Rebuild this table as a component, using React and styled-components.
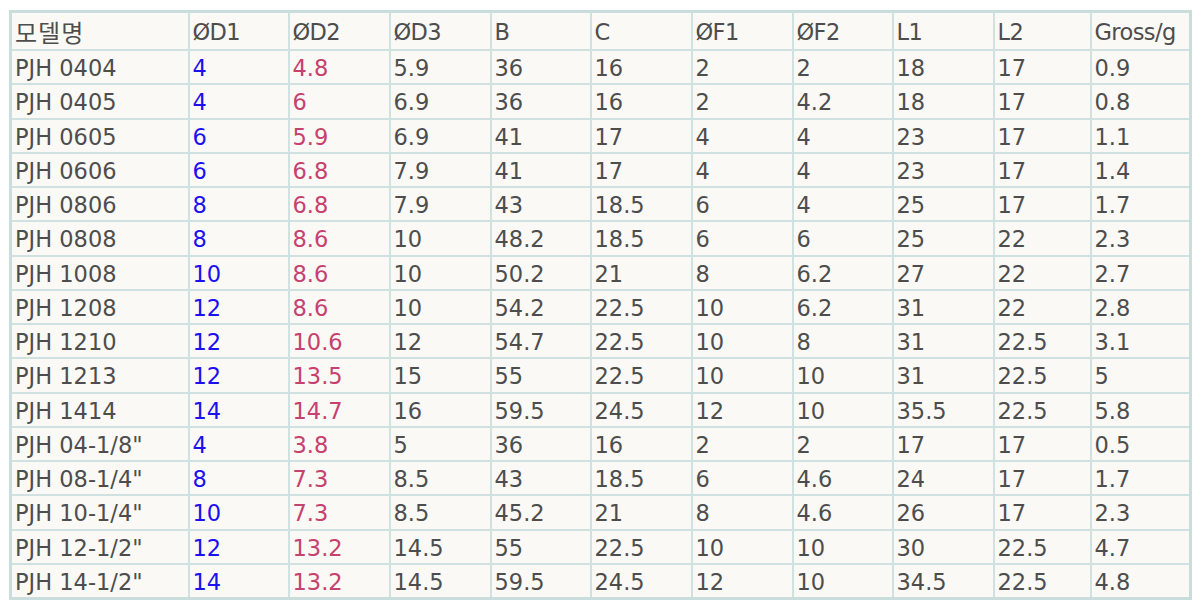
import styled, { createGlobalStyle } from "styled-components";

const GlobalStyle = createGlobalStyle`
  body {
    margin: 0;
    background: #ffffff;
  }
`;

const columns = ["ØD1", "ØD2", "ØD3", "B", "C", "ØF1", "ØF2", "L1", "L2", "Gross/g"];
const widths = [178, 100, 101, 101, 100, 101, 101, 100, 101, 97, 100];

const rows = [
  ["PJH 0404", "4", "4.8", "5.9", "36", "16", "2", "2", "18", "17", "0.9"],
  ["PJH 0405", "4", "6", "6.9", "36", "16", "2", "4.2", "18", "17", "0.8"],
  ["PJH 0605", "6", "5.9", "6.9", "41", "17", "4", "4", "23", "17", "1.1"],
  ["PJH 0606", "6", "6.8", "7.9", "41", "17", "4", "4", "23", "17", "1.4"],
  ["PJH 0806", "8", "6.8", "7.9", "43", "18.5", "6", "4", "25", "17", "1.7"],
  ["PJH 0808", "8", "8.6", "10", "48.2", "18.5", "6", "6", "25", "22", "2.3"],
  ["PJH 1008", "10", "8.6", "10", "50.2", "21", "8", "6.2", "27", "22", "2.7"],
  ["PJH 1208", "12", "8.6", "10", "54.2", "22.5", "10", "6.2", "31", "22", "2.8"],
  ["PJH 1210", "12", "10.6", "12", "54.7", "22.5", "10", "8", "31", "22.5", "3.1"],
  ["PJH 1213", "12", "13.5", "15", "55", "22.5", "10", "10", "31", "22.5", "5"],
  ["PJH 1414", "14", "14.7", "16", "59.5", "24.5", "12", "10", "35.5", "22.5", "5.8"],
  ["PJH 04-1/8\"", "4", "3.8", "5", "36", "16", "2", "2", "17", "17", "0.5"],
  ["PJH 08-1/4\"", "8", "7.3", "8.5", "43", "18.5", "6", "4.6", "24", "17", "1.7"],
  ["PJH 10-1/4\"", "10", "7.3", "8.5", "45.2", "21", "8", "4.6", "26", "17", "2.3"],
  ["PJH 12-1/2\"", "12", "13.2", "14.5", "55", "22.5", "10", "10", "30", "22.5", "4.7"],
  ["PJH 14-1/2\"", "14", "13.2", "14.5", "59.5", "24.5", "12", "10", "34.5", "22.5", "4.8"],
];

const tones = { 1: "blue", 2: "pink" };

export default function App() {
  return (
    <>
      <GlobalStyle />
      <Wrap>
        <Table>
          <colgroup>
            {widths.map((w, i) => (
              <col key={i} style={{ width: w }} />
            ))}
          </colgroup>
          <thead>
            <tr>
              <Head>
                <Korean>모델명</Korean>
              </Head>
              {columns.map((c) => (
                <Head key={c}>{c}</Head>
              ))}
            </tr>
          </thead>
          <tbody>
            {rows.map((r) => (
              <Row key={r[0]}>
                {r.map((v, i) => (
                  <Cell key={i} $tone={tones[i]}>
                    {v}
                  </Cell>
                ))}
              </Row>
            ))}
          </tbody>
        </Table>
      </Wrap>
    </>
  );
}

const Wrap = styled.div`
  padding: 10px 0 0 9px;
`;

const Table = styled.table`
  border-collapse: collapse;
  table-layout: fixed;
  width: 1182px;
  background: #faf9f5;
  border: 3px solid #c9dddd;
  font-family: "DejaVu Sans", Verdana, sans-serif;
  font-size: 22.5px;
  color: #4d4d4d;
`;

const Head = styled.th`
  height: 35px;
  padding: 1px 0 0 3px;
  text-align: left;
  font-weight: normal;
  border: 2px solid #cfe1e1;
  white-space: nowrap;
  letter-spacing: -0.6px;
`;

const Korean = styled.span`
  font-family: "Noto Sans CJK KR", sans-serif;
  font-size: 24px;
  letter-spacing: 1px;
`;

const Row = styled.tr`
  height: 34.25px;
`;

const Cell = styled.td`
  padding: 2px 0 0 3px;
  border: 2px solid #cfe1e1;
  white-space: nowrap;
  color: ${(p) => (p.$tone === "blue" ? "#1a10f0" : p.$tone === "pink" ? "#c6416e" : "#4d4d4d")};
`;
